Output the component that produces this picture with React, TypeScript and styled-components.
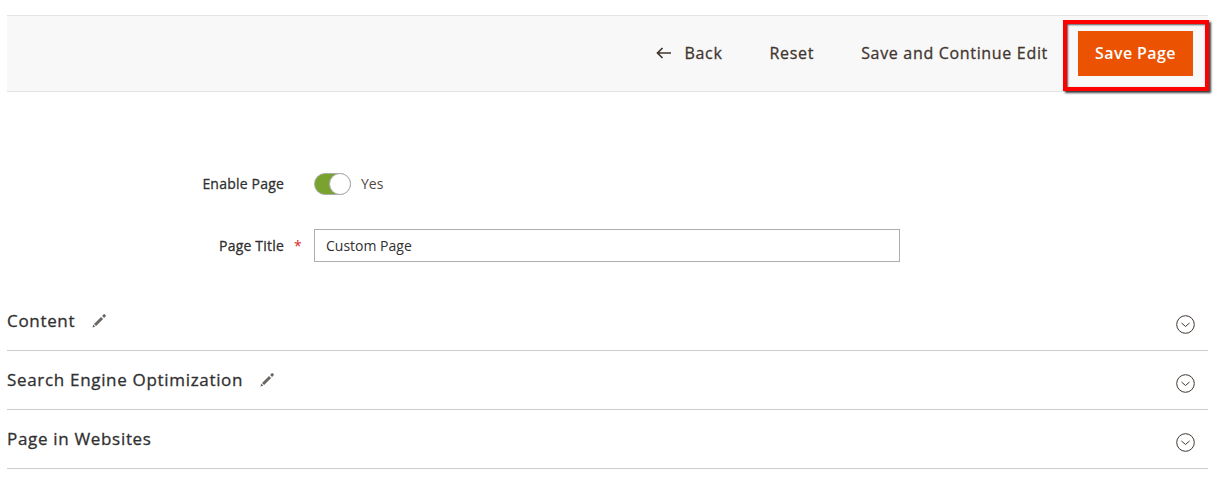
import styled, { createGlobalStyle } from "styled-components";

const GlobalStyle = createGlobalStyle`
  html, body {
    margin: 0;
    padding: 0;
    background: #fff;
    font-family: "Open Sans", "Liberation Sans", sans-serif;
    color: #303030;
  }
`;

const Page = styled.div`
  width: 1201px;
  padding: 15px 0 0 7px;
`;

const Toolbar = styled.div`
  height: 75px;
  display: flex;
  align-items: center;
  justify-content: flex-end;
  padding-right: 15px;
  background: #f8f8f8;
  border-top: 1px solid #e3e3e3;
  border-bottom: 1px solid #e3e3e3;
`;

const ActionButton = styled.button`
  display: flex;
  align-items: center;
  gap: 13px;
  padding: 0 0 2px;
  margin-right: ${({ $gap }: { $gap: number }) => $gap}px;
  border: 0;
  background: none;
  color: #41362f;
  font: 500 16px "Open Sans", sans-serif;
  letter-spacing: 0.68px;
  -webkit-text-stroke: 0.3px;
`;

const PrimaryButton = styled.button`
  position: relative;
  width: 115px;
  height: 45px;
  padding: 0 0 2px;
  border: 0;
  background: #eb5202;
  color: #fff;
  font: 600 16px "Open Sans", sans-serif;
  letter-spacing: 0.4px;
`;

const Highlight = styled.span`
  position: absolute;
  top: -11px;
  left: -15px;
  width: 146px;
  height: 71px;
  box-sizing: border-box;
  border: 4px solid #ff0000;
  box-shadow: 2px 2px 2px rgba(0, 0, 0, 0.75), inset 1px 1px 2px rgba(0, 0, 0, 0.65);
`;

const Form = styled.div`
  padding-top: 75px;
`;

const Field = styled.div`
  display: flex;
  align-items: center;
  height: 33px;
  margin-top: ${({ $top }: { $top: number }) => $top}px;
`;

const Label = styled.label`
  width: 277px;
  text-align: right;
  font-size: 14px;
  font-weight: 500;
  letter-spacing: 0.2px;
  -webkit-text-stroke: 0.3px;
  color: #303030;
`;

const Required = styled.span`
  width: 30px;
  padding-left: 10px;
  box-sizing: border-box;
  color: #e22626;
  font-size: 14px;
`;

const Switch = styled.span`
  position: relative;
  width: 37px;
  height: 22px;
  box-sizing: border-box;
  background: #79a22e;
  border: 1px solid #adadad;
  border-radius: 12px;
`;

const Knob = styled.span`
  position: absolute;
  top: -1px;
  right: -1px;
  width: 22px;
  height: 22px;
  box-sizing: border-box;
  background: #fff;
  border: 1px solid #adadad;
  border-radius: 50%;
`;

const SwitchText = styled.span`
  margin-left: 10px;
  font-size: 14px;
  color: #514943;
`;

const TextInput = styled.input`
  width: 586px;
  height: 33px;
  box-sizing: border-box;
  padding: 0 11px;
  border: 1px solid #adadad;
  outline: 0;
  font: 400 14px "Open Sans", sans-serif;
  color: #303030;
`;

const Sections = styled.div`
  margin-top: 30px;
`;

const Section = styled.div`
  height: 56px;
  padding-bottom: 2px;
  display: flex;
  align-items: center;
  border-bottom: 1px solid #cccccc;
`;

const SectionTitle = styled.span`
  font-size: 17px;
  font-weight: 500;
  letter-spacing: 0.68px;
  -webkit-text-stroke: 0.3px;
  color: #303030;
`;

const PencilIcon = styled.svg`
  width: 15px;
  height: 15px;
  margin-left: 17px;
  fill: #6b6662;
`;

const ChevronCircle = styled.svg`
  width: 19px;
  height: 19px;
  margin: 8px 13px 0 auto;
  fill: none;
  stroke: #41362f;
  stroke-width: 1;
`;

const Pencil = () => (
  <PencilIcon viewBox="0 0 15 15">
    <path d="M0.5 14.5l0.7-2.9 2.2 2.2zM2 10.9l7-7 2.1 2.1-7 7zM10.1 2.9l1.6-1.6a0.7 0.7 0 0 1 1 0l1 1a0.7 0.7 0 0 1 0 1l-1.6 1.6z" />
  </PencilIcon>
);

const Chevron = () => (
  <ChevronCircle viewBox="0 0 19 19">
    <circle cx="9.5" cy="9.5" r="8.8" />
    <path d="M5.5 8l4 3.5 4-3.5" />
  </ChevronCircle>
);

const sections = [
  { title: "Content", editable: true },
  { title: "Search Engine Optimization", editable: true },
  { title: "Page in Websites", editable: false },
];

const App = () => {
  return (
    <Page>
      <GlobalStyle />
      <Toolbar>
        <ActionButton $gap={47}>
          <svg width="16" height="12" viewBox="0 0 16 12" fill="none" stroke="#41362f" strokeWidth="1.7">
            <path d="M15 6H2M6.5 1L1.5 6l5 5" />
          </svg>
          Back
        </ActionButton>
        <ActionButton $gap={47}>Reset</ActionButton>
        <ActionButton $gap={30}>Save and Continue Edit</ActionButton>
        <PrimaryButton>
          Save Page
          <Highlight />
        </PrimaryButton>
      </Toolbar>
      <Form>
        <Field $top={0}>
          <Label>Enable Page</Label>
          <Required />
          <Switch>
            <Knob />
          </Switch>
          <SwitchText>Yes</SwitchText>
        </Field>
        <Field $top={29}>
          <Label>Page Title</Label>
          <Required>*</Required>
          <TextInput readOnly value="Custom Page" />
        </Field>
      </Form>
      <Sections>
        {sections.map((section) => (
          <Section key={section.title}>
            <SectionTitle>{section.title}</SectionTitle>
            {section.editable && <Pencil />}
            <Chevron />
          </Section>
        ))}
      </Sections>
    </Page>
  );
};

export default App;
